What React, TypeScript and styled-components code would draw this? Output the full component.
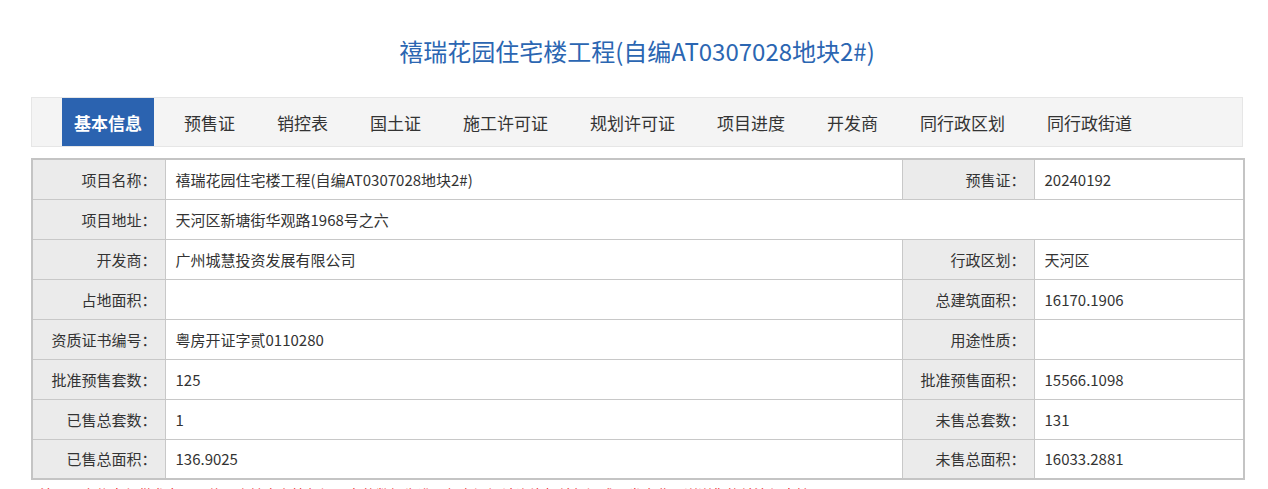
import React from "react";
import styled, { createGlobalStyle } from "styled-components";

const Global = createGlobalStyle`
  html, body { margin: 0; padding: 0; background: #fff; }
  body { font-family: "Noto Sans CJK SC", "Noto Sans", sans-serif; color: #333; }
`;

const Page = styled.div`
  width: 1212px;
  margin-left: 31px;
`;

const TitleBar = styled.div`
  height: 97px;
  display: flex;
  align-items: center;
  justify-content: center;
  padding-top: 3px;
  box-sizing: border-box;
`;

const Title = styled.h1`
  margin: 0;
  font-size: 24px;
  font-weight: 400;
  color: #2b66b2;
`;

const TabBar = styled.div`
  height: 50px;
  box-sizing: border-box;
  display: flex;
  align-items: stretch;
  gap: 18px;
  padding-left: 30px;
  background: #f4f4f4;
  border: 1px solid #e6e6e6;
`;

const Tab = styled.div<{ $active?: boolean }>`
  display: flex;
  align-items: center;
  padding: 0 12px;
  font-size: 17px;
  color: ${(p) => (p.$active ? "#fff" : "#333")};
  font-weight: ${(p) => (p.$active ? 700 : 400)};
  background: ${(p) => (p.$active ? "#2b63b0" : "transparent")};
`;

const Table = styled.table`
  margin-top: 11px;
  width: 1212px;
  border-collapse: collapse;
  table-layout: fixed;
  border: 2px solid #c4c4c4;
  font-size: 15px;
`;

const Row = styled.tr`
  height: 40px;
`;

const LabelCell = styled.td`
  background: #ebebeb;
  border: 1px solid #c8c8c8;
  text-align: right;
  padding: 0 8px 0 0;
  color: #333;
  white-space: nowrap;
`;

const ValueCell = styled.td`
  background: #fff;
  border: 1px solid #c8c8c8;
  text-align: left;
  padding: 0 0 0 10px;
  color: #333;
  white-space: nowrap;
`;

const Note = styled.p`
  margin: 4px 0 0 9px;
  font-size: 14px;
  line-height: 20px;
  color: #f02020;
  white-space: nowrap;
`;

const tabs = [
  "基本信息",
  "预售证",
  "销控表",
  "国土证",
  "施工许可证",
  "规划许可证",
  "项目进度",
  "开发商",
  "同行政区划",
  "同行政街道",
];

type Pair = [string, string];
type RowData = { left: Pair; right?: Pair };

const rows: RowData[] = [
  { left: ["项目名称：", "禧瑞花园住宅楼工程(自编AT0307028地块2#)"], right: ["预售证：", "20240192"] },
  { left: ["项目地址：", "天河区新塘街华观路1968号之六"] },
  { left: ["开发商：", "广州城慧投资发展有限公司"], right: ["行政区划：", "天河区"] },
  { left: ["占地面积：", ""], right: ["总建筑面积：", "16170.1906"] },
  { left: ["资质证书编号：", "粤房开证字贰0110280"], right: ["用途性质：", ""] },
  { left: ["批准预售套数：", "125"], right: ["批准预售面积：", "15566.1098"] },
  { left: ["已售总套数：", "1"], right: ["未售总套数：", "131"] },
  { left: ["已售总面积：", "136.9025"], right: ["未售总面积：", "16033.2881"] },
];

export default function App() {
  return (
    <>
      <Global />
      <Page>
        <TitleBar>
          <Title>禧瑞花园住宅楼工程(自编AT0307028地块2#)</Title>
        </TitleBar>
        <TabBar>
          {tabs.map((t, i) => (
            <Tab key={t} $active={i === 0}>
              {t}
            </Tab>
          ))}
        </TabBar>
        <Table>
          <colgroup>
            <col style={{ width: 133 }} />
            <col style={{ width: 737 }} />
            <col style={{ width: 132 }} />
            <col style={{ width: 210 }} />
          </colgroup>
          <tbody>
            {rows.map((r) => (
              <Row key={r.left[0]}>
                <LabelCell>{r.left[0]}</LabelCell>
                {r.right ? (
                  <>
                    <ValueCell>{r.left[1]}</ValueCell>
                    <LabelCell>{r.right[0]}</LabelCell>
                    <ValueCell>{r.right[1]}</ValueCell>
                  </>
                ) : (
                  <ValueCell colSpan={3}>{r.left[1]}</ValueCell>
                )}
              </Row>
            ))}
          </tbody>
        </Table>
        <Note>
          注：以上信息仅供参考，具体以房地产主管部门公布的数据为准，如有疑问请咨询相关部门或开发企业，谢谢您的关注与支持。
        </Note>
      </Page>
    </>
  );
}
